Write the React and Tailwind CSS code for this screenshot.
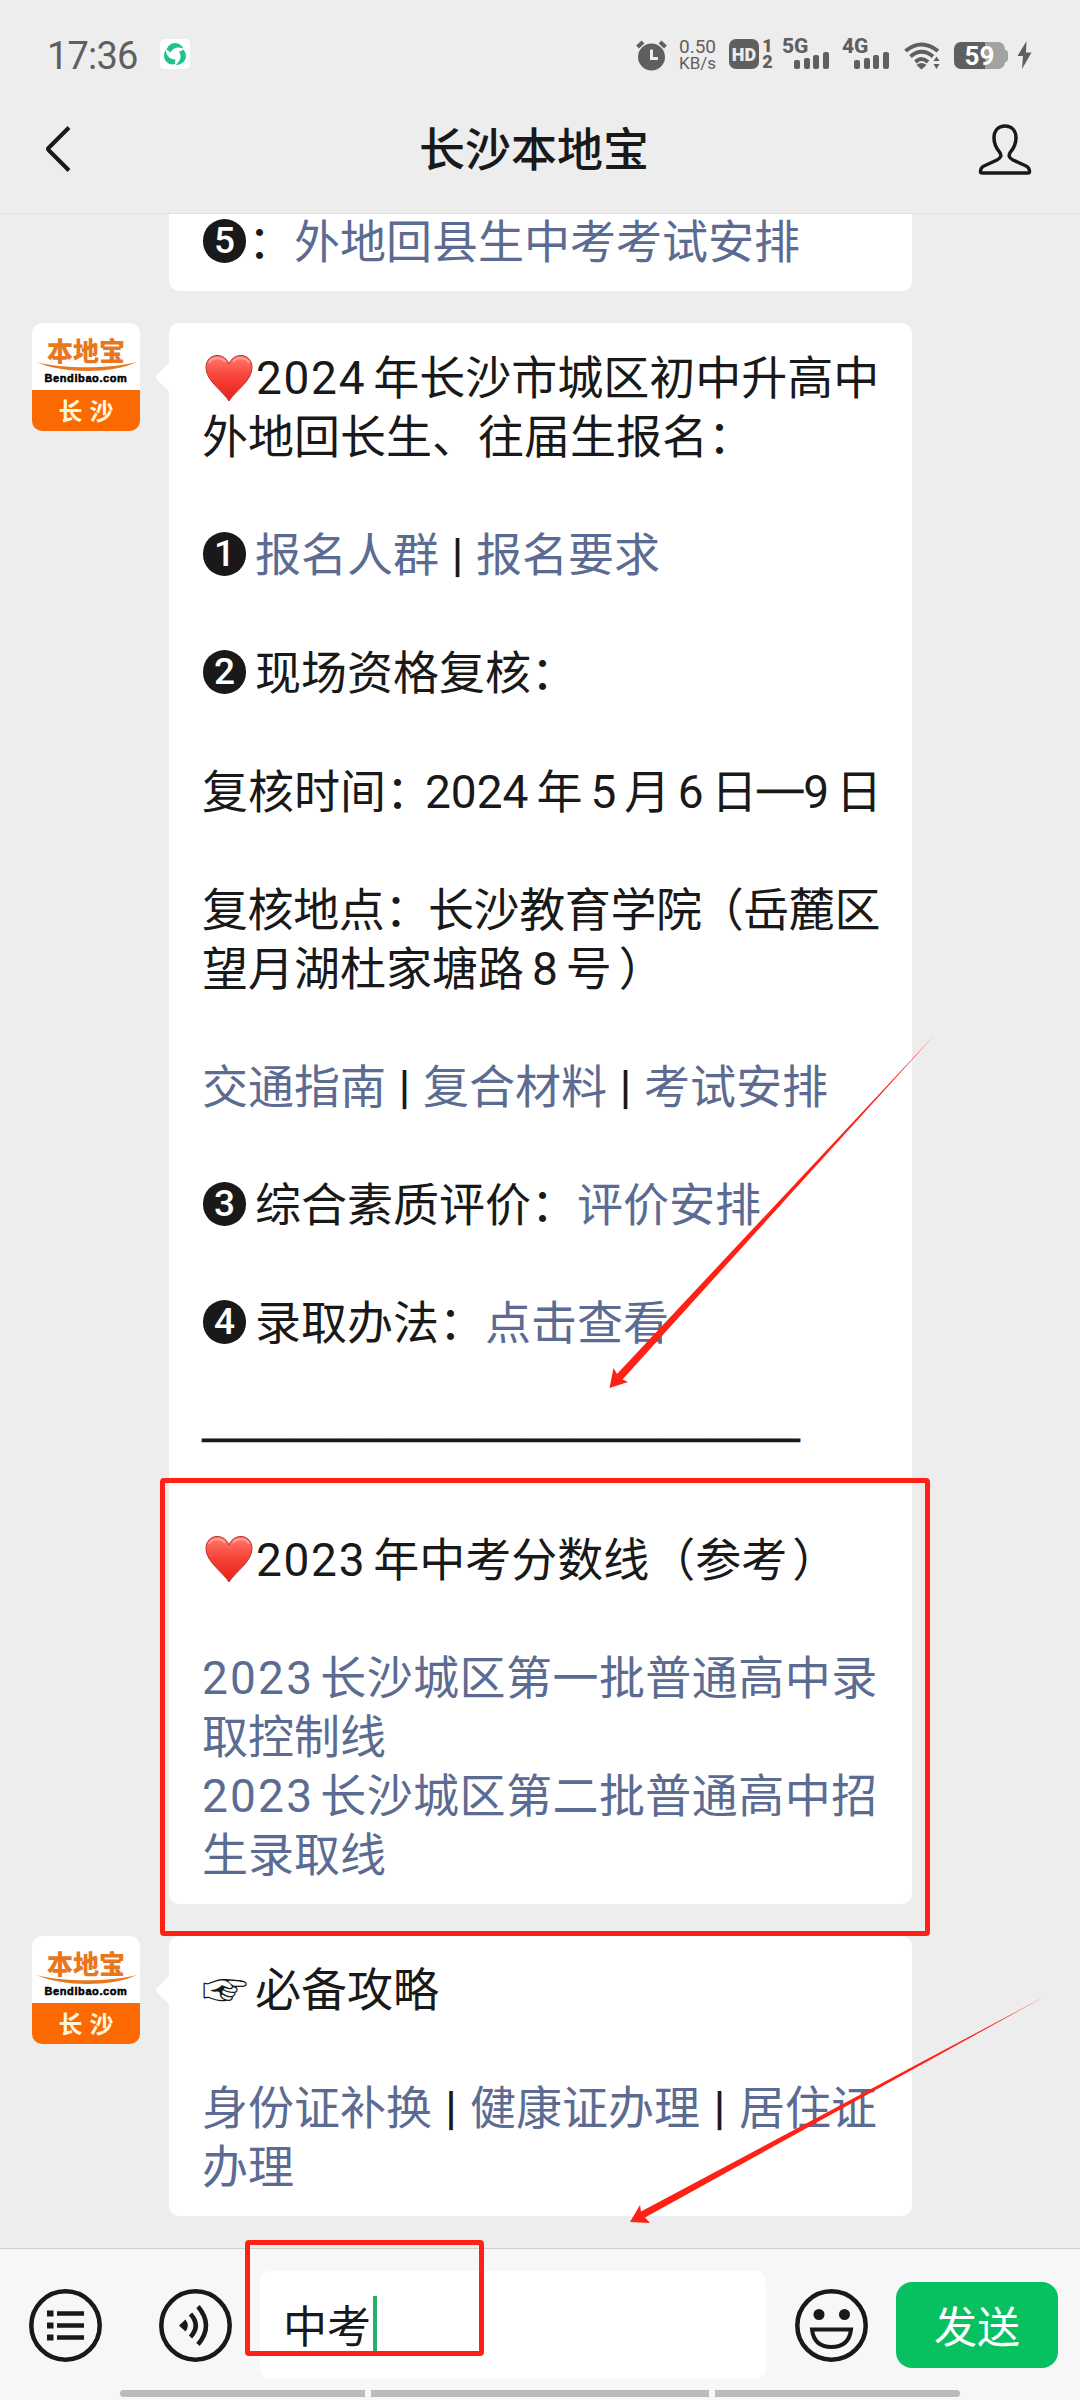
const SANS = "font-['Noto_Sans_CJK_SC',sans-serif]";

function Num({ children, className = '' }) {
  return <span className={`font-['Roboto',sans-serif] ${className}`}>{children}</span>;
}

function Bar({ className = 'w-[37px]' }) {
  return (
    <span className={`inline-block text-center font-['Roboto',sans-serif] font-medium ${className}`}>|</span>
  );
}

function Dash({ children }) {
  return (
    <span className="relative -top-[5px] font-['Liberation_Sans',sans-serif] leading-none [-webkit-text-stroke:0.7px_#191919]">
      {children}
    </span>
  );
}

function A({ children, className = '' }) {
  return <a className={`text-[#5b6b92] ${className}`}>{children}</a>;
}

function Line({ children, className = '' }) {
  return <div className={`h-[59.080px] whitespace-nowrap ${className}`}>{children}</div>;
}

function Badge({ children }) {
  return (
    <span className="relative -top-[5px] ml-px mr-[9px] inline-flex h-[44px] w-[43px] items-center justify-center rounded-full bg-[#191919] align-middle font-['Roboto',sans-serif] text-[37px] font-medium leading-none text-white">
      {children}
    </span>
  );
}

function Heart() {
  return (
    <svg className="relative -top-[4px] mr-[3px] ml-[3px] inline-block align-middle" width="48" height="48" viewBox="0 0 48 48">
      <defs>
        <linearGradient id="heart" x1="0" y1="0" x2="0" y2="1">
          <stop offset="0" stopColor="#ff7a6e" />
          <stop offset="0.45" stopColor="#f8453b" />
          <stop offset="1" stopColor="#e32117" />
        </linearGradient>
      </defs>
      <path
        d="M24 47C18 37 1 27 1 13.500C1 6 6 1.500 12 1.500C18 1.500 22 5 24 10C26 5 30 1.500 36 1.500C42 1.500 47 6 47 13.500C47 27 30 37 24 47Z"
        fill="url(#heart)"
        stroke="#b9332b"
        strokeWidth="1"
      />
      <path d="M4 9C6 4 16 2 20 8M28 8C32 2 42 4 44 9" fill="none" stroke="#ffb3ab" strokeWidth="2" opacity="0.7" />
    </svg>
  );
}

function Avatar() {
  return (
    <div className="relative flex h-[108px] w-[108px] shrink-0 flex-col overflow-hidden rounded-[10px] bg-white">
      <div className="flex h-[67px] flex-col items-center pt-[13px]">
        <span className="text-[26px] font-black leading-[28px] text-[#e8771e]">本地宝</span>
        <span className="mt-[8px] font-['Liberation_Sans',sans-serif] text-[11px] font-black leading-[12px] tracking-[0.600px] text-black [-webkit-text-stroke:0.5px_black]">
          Bendibao.com
        </span>
      </div>
      <div className="flex flex-1 items-center justify-center gap-[7px] bg-[#fb6a02] pb-[2px] text-[24px] font-bold leading-none text-[#fff6da]">
        <span>长</span>
        <span>沙</span>
      </div>
      <svg className="absolute left-0 top-[37px]" width="108" height="14" viewBox="0 0 108 14">
        <path d="M4 2C30 9 78 9 105 2C80 14 32 14 4 2Z" fill="#e8771e" />
      </svg>
    </div>
  );
}

function Message({ children, className = '' }) {
  return (
    <div className="flex items-start gap-[29px] pl-[32px]">
      <Avatar />
      <div className={`relative w-[743px] rounded-[10px] bg-white pl-[33px] ${className}`}>
        <svg className="absolute -left-[14px] top-[38px]" width="15" height="32" viewBox="0 0 15 32">
          <path d="M15 1L2 13.500Q0 16 2 18.500L15 31Z" fill="#fff" />
        </svg>
        {children}
      </div>
    </div>
  );
}

function Signal({ label }) {
  return (
    <div className="flex h-[30px] w-[48px] flex-col">
      <span className="h-[14px] font-['Roboto',sans-serif] text-[21px] font-extrabold leading-[15px]">{label}</span>
      <div className="-mt-px flex items-end gap-[3.500px] pl-[12px]">
        <i className="h-[9px] w-[6px] rounded-[2px] bg-[#5f5f5f]" />
        <i className="h-[11px] w-[6px] rounded-[2px] bg-[#5f5f5f]" />
        <i className="h-[14px] w-[6px] rounded-[2px] bg-[#5f5f5f]" />
        <i className="h-[17px] w-[6px] rounded-[2px] bg-[#5f5f5f]" />
      </div>
    </div>
  );
}

function StatusBar() {
  return (
    <div className="flex h-[108px] items-start pl-[47px] pt-[39px] text-[#5f5f5f]">
      <span className="w-[113px] font-['Roboto',sans-serif] text-[38px] leading-[35px] tracking-[-0.800px]">17:36</span>
      <svg className="shrink-0" width="30" height="30" viewBox="0 0 30 30">
        <rect width="30" height="30" rx="5" fill="#fff" />
        <g fill="#1fc28b">
          <path id="blade" d="M6.500 11C8 5 15 1.500 21 6.500C23 8 23.500 9 23 9.500C18 7.500 13 8.500 10.500 13.500C9 12 7.500 11 6.500 11Z" />
          <path d="M6.500 11C8 5 15 1.500 21 6.500C23 8 23.500 9 23 9.500C18 7.500 13 8.500 10.500 13.500C9 12 7.500 11 6.500 11Z" transform="rotate(120 15 15.500)" />
          <path d="M6.500 11C8 5 15 1.500 21 6.500C23 8 23.500 9 23 9.500C18 7.500 13 8.500 10.500 13.500C9 12 7.500 11 6.500 11Z" transform="rotate(240 15 15.500)" />
        </g>
      </svg>
      <svg className="ml-[446px] mt-px shrink-0" width="31" height="31" viewBox="0 0 31 31">
        <circle cx="15.500" cy="17" r="13.500" fill="#5f5f5f" />
        <path d="M1.500 7L7 2M29.500 7L24 2" stroke="#5f5f5f" strokeWidth="4" />
        <path d="M15.500 9.500V18.500H22" fill="none" stroke="#ededed" strokeWidth="3" />
      </svg>
      <div className="ml-[10px] flex w-[41px] flex-col items-center font-['Roboto',sans-serif]">
        <span className="text-[19px] leading-[15px]">0.50</span>
        <span className="pt-px text-[17px] leading-[17px]">KB/s</span>
      </div>
      <div className="ml-[11px] flex h-[30px] w-[30px] items-center justify-center rounded-[7px] bg-[#5f5f5f] font-['Roboto',sans-serif] text-[18px] font-black text-[#ededed]">
        HD
      </div>
      <div className="ml-[2px] flex w-[13px] flex-col items-center font-['Roboto',sans-serif] text-[18px] font-black leading-[16px]">
        <span className="-mt-px">1</span>
        <span>2</span>
      </div>
      <div className="ml-[8px] flex gap-[12px]">
        <Signal label="5G" />
        <Signal label="4G" />
      </div>
      <svg className="ml-[14px] mt-[3px] shrink-0" width="37" height="28" viewBox="0 0 37 28">
        <g fill="none" stroke="#5f5f5f" strokeWidth="4">
          <path d="M1.500 9Q17.500-4 34 9" />
          <path d="M6.500 14.500Q17.500 5 29 14.500" />
          <path d="M11.500 20Q17.500 14 24 20" />
        </g>
        <path d="M12.500 23Q17.500 19 22.500 23L17.500 27.500ZM29.500 19L32.500 14.500L35.500 19ZM29.500 22L32.500 27L35.500 22Z" fill="#5f5f5f" />
      </svg>
      <div className="ml-[13px] mt-[3px] flex items-center">
        <div className="flex h-[27px] w-[51px] items-center justify-center rounded-[7px] bg-linear-to-r from-[#5f5f5f] from-60% to-[#a2a2a2] to-60% pt-px font-['Roboto',sans-serif] text-[26px] font-bold leading-none text-white">
          59
        </div>
        <i className="h-[12px] w-[3px] rounded-r bg-[#a2a2a2]" />
      </div>
      <svg className="ml-[9px] mt-[2px] shrink-0" width="15" height="28" viewBox="0 0 15 28">
        <path d="M9.500 0L0.500 15H6L5 28L14.500 11.500H9Z" fill="#5f5f5f" />
      </svg>
    </div>
  );
}

function TitleBar() {
  return (
    <div className="flex h-[82px] items-center justify-between pl-[44px] pr-[48px]">
      <svg width="60" height="50" viewBox="0 0 60 50">
        <path d="M25 3.500L4.500 24Q3.500 25 4.500 26L25 46.500" fill="none" stroke="#191919" strokeWidth="4" />
      </svg>
      <h1 className="-ml-[14px] pb-[6px] text-[46px] font-medium leading-none">长沙本地宝</h1>
      <svg width="54" height="52" viewBox="0 0 54 52">
        <path
          d="M27 3C20 3 16 8 16 15C16 22 19 26 21.500 29C24 32.500 23 35 19 37L7 42.500C3.500 44 2.500 46 2.500 48.500Q2.500 50 4.500 50H49.500Q51.500 50 51.500 48.500C51.500 46 50.500 44 47 42.500L35 37C31 35 30 32.500 32.500 29C35 26 38 22 38 15C38 8 34 3 27 3Z"
          fill="none"
          stroke="#191919"
          strokeWidth="3.500"
        />
      </svg>
    </div>
  );
}

function InputBar() {
  return (
    <footer className="flex h-[152px] flex-col border-t border-[#cfcfcf] bg-[#f7f7f7]">
      <div className="flex h-[141px] items-center pl-[29px] pt-[11px]">
        <svg width="73" height="73" viewBox="0 0 73 73">
          <circle cx="36.500" cy="36.500" r="34.200" fill="none" stroke="#191919" strokeWidth="4.500" />
          <path d="M18 24.500H24.500M18 36.500H24.500M18 48.500H24.500" stroke="#191919" strokeWidth="6" />
          <path d="M28 24.500H55M28 36.500H55M28 48.500H55" stroke="#191919" strokeWidth="4.500" />
        </svg>
        <svg className="ml-[57px]" width="73" height="73" viewBox="0 0 73 73">
          <circle cx="36.500" cy="36.500" r="34.200" fill="none" stroke="#191919" strokeWidth="4.500" />
          <path d="M20 36.500L26.500 30.500Q31 36.500 26.500 42.500Z" fill="#191919" />
          <path d="M31.500 25Q42 36.500 31.500 48M39 17.500Q55 36.500 39 55.500" fill="none" stroke="#191919" strokeWidth="4.500" />
        </svg>
        <div className="ml-[28px] flex h-[108px] w-[506px] items-center rounded-[10px] bg-white pl-[23px] text-[44px]">
          <span className="pb-[3px]">中考</span>
          <i className="ml-[2px] h-[59px] w-[4px] bg-[#26ae6b]" />
        </div>
        <svg className="ml-[29px]" width="73" height="73" viewBox="0 0 73 73">
          <circle cx="36.500" cy="36.500" r="34.200" fill="none" stroke="#191919" strokeWidth="4.500" />
          <circle cx="24" cy="25.500" r="5.500" fill="#191919" />
          <circle cx="49.500" cy="25.500" r="5.500" fill="#191919" />
          <path d="M17 40.500H56Q54 58 36.500 58Q19 58 17 40.500Z" fill="none" stroke="#191919" strokeWidth="4" />
        </svg>
        <button className="ml-[28px] h-[86px] w-[162px] rounded-[16px] bg-[#07c160] pb-[2px] text-[43px] leading-none text-white">
          发送
        </button>
      </div>
      <div className="flex gap-[6px] pl-[120px]">
        <i className="h-[7px] w-[245px] rounded-l-full bg-[#bbb]" />
        <i className="h-[7px] w-[338px] bg-[#bbb]" />
        <i className="h-[7px] w-[245px] rounded-r-full bg-[#bbb]" />
      </div>
    </footer>
  );
}

// red boxes and arrows drawn over the chat
function Marks() {
  return (
    <>
      <div className="absolute left-[160px] top-[1478px] h-[458px] w-[770px] rounded-[4px] border-[5px] border-[#ff2116]" />
      <div className="absolute left-[245px] top-[2240px] h-[116px] w-[239px] rounded-[4px] border-[5px] border-[#ff2116]" />
      <svg className="absolute left-0 top-0" width="1080" height="2400" viewBox="0 0 1080 2400" fill="#ff2116">
        <path d="M934.500 1035L617 1374L613.500 1368L609.500 1388L628 1382L622.500 1379.500Z" />
        <path d="M1046.500 1995.500L641 2211.500L640 2205L630 2222L650 2223L645 2217.500Z" />
      </svg>
    </>
  );
}

export default function App() {
  return (
    <div className={`relative flex h-[2400px] w-[1080px] flex-col overflow-hidden bg-[#ededed] text-[#191919] ${SANS}`}>
      <header className="h-[214px] shrink-0 border-b border-[#e2e2e2]">
        <StatusBar />
        <TitleBar />
      </header>

      <main className="flex min-h-0 flex-1 flex-col text-[46px] leading-[59px]">
        <div className="ml-[169px] h-[77px] w-[743px] rounded-b-[10px] bg-white pl-[33px]">
          <div className="-mt-[5px]">
            <Line>
              <Badge>5</Badge>
              <span className="-ml-[7px]">：</span>
              <A>外地回县生中考考试安排</A>
            </Line>
          </div>
        </div>

        <div className="mt-[32px]">
          <Message className="h-[1581px] pt-[22px]">
            <Line>
              <Heart />
              <Num className="mr-[7px] tracking-[1.700px]">2024</Num>年长沙市城区初中升高中
            </Line>
            <Line>外地回长生、往届生报名：</Line>
            <Line />
            <Line>
              <Badge>1</Badge>
              <A>报名人群</A>
              <Bar />
              <A>报名要求</A>
            </Line>
            <Line />
            <Line>
              <Badge>2</Badge>现场资格复核：
            </Line>
            <Line />
            <Line>
              复核时间：<Num className="-ml-[7px] mr-[8px]">2024</Num>年<Num className="mx-[8px]">5</Num>月
              <Num className="mx-[7.500px]">6</Num>日<Dash>—</Dash>
              <Num className="mr-[7px]">9</Num>日
            </Line>
            <Line />
            <Line className="tracking-[-0.400px]">
              复核地点：<span className="-ml-[2px]">长沙教育学院</span>
              <span className="-ml-[4px]">（</span>岳麓区
            </Line>
            <Line>
              望月湖杜家塘路<Num className="mx-[8px]">8</Num>号<span className="ml-[7px]">）</span>
            </Line>
            <Line />
            <Line>
              <A>交通指南</A>
              <Bar />
              <A>复合材料</A>
              <Bar />
              <A>考试安排</A>
            </Line>
            <Line />
            <Line>
              <Badge>3</Badge>综合素质评价：<A>评价安排</A>
            </Line>
            <Line />
            <Line>
              <Badge>4</Badge>录取办法：<A>点击查看</A>
            </Line>
            <Line />
            <Line>
              <Dash>—————————————</Dash>
            </Line>
            <Line />
            <Line>
              <Heart />
              <Num className="mr-[7px] tracking-[1.700px]">2023</Num>年中考分数线（参考<span className="ml-[5px]">）</span>
            </Line>
            <Line />
            <Line>
              <A className="tracking-[0.450px]">
                <Num className="mr-[6px] tracking-[2.200px]">2023</Num>长沙城区第一批普通高中录
              </A>
            </Line>
            <Line>
              <A>取控制线</A>
            </Line>
            <Line>
              <A className="tracking-[0.450px]">
                <Num className="mr-[6px] tracking-[2.200px]">2023</Num>长沙城区第二批普通高中招
              </A>
            </Line>
            <Line>
              <A>生录取线</A>
            </Line>
          </Message>
        </div>

        <div className="mt-[32px]">
          <Message className="h-[280px] pt-[21px]">
            <Line>
              <span className="mr-[7px]">☞</span>必备攻略
            </Line>
            <Line />
            <Line>
              <A>身份证补换</A>
              <Bar className="w-[38px]" />
              <A>健康证办理</A>
              <Bar className="w-[39px]" />
              <A>居住证</A>
            </Line>
            <Line>
              <A>办理</A>
            </Line>
          </Message>
        </div>
      </main>

      <InputBar />
      <Marks />
    </div>
  );
}
